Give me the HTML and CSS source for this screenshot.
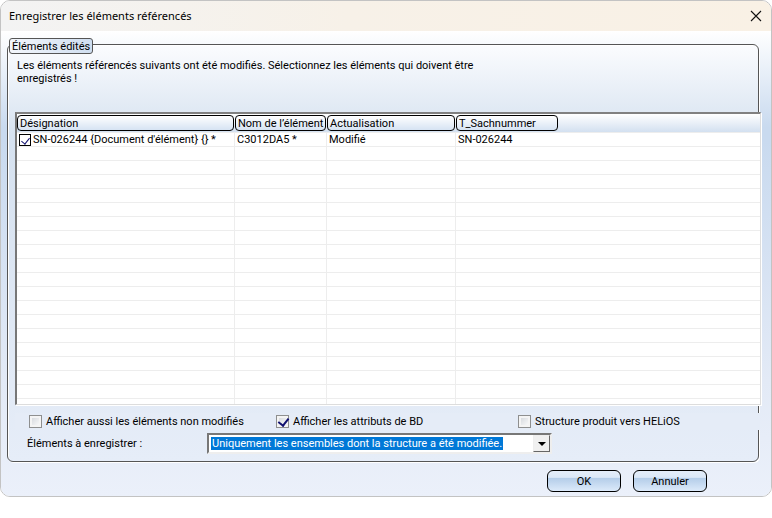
FILE: index.html
```html
<!DOCTYPE html>
<html lang="fr">
<head>
<meta charset="utf-8">
<title>Enregistrer les éléments référencés</title>
<link rel="stylesheet" href="styles.css">
</head>
<body>
<main class="dialog">
  <header class="titlebar">
    <h1>Enregistrer les éléments référencés</h1>
    <button class="close" type="button" aria-label="Fermer">
      <svg width="12" height="12" viewBox="0 0 12 12"><path d="M1 1l10 10M11 1L1 11" fill="none" stroke="#111" stroke-width="1.1"/></svg>
    </button>
  </header>
  <form class="content">
    <section class="group" aria-labelledby="legend">
      <h2 class="legend" id="legend">Éléments édités</h2>
      <p class="intro">Les éléments référencés suivants ont été modifiés. Sélectionnez les éléments qui doivent être enregistrés !</p>
      <div class="list">
        <table>
          <colgroup><col class="c1"><col class="c2"><col class="c3"><col class="c4"><col></colgroup>
          <thead>
            <tr><th><span>Désignation</span></th><th><span>Nom de l’élément</span></th><th><span>Actualisation</span></th><th><span>T_Sachnummer</span></th><th></th></tr>
          </thead>
          <tbody>
            <tr>
              <td><label class="item"><input class="tick" type="checkbox" checked>SN-026244 {Document d'élément} {} *</label></td>
              <td>C3012DA5 *</td><td>Modifié</td><td>SN-026244</td><td></td>
            </tr>
            <tr><td></td><td></td><td></td><td></td><td></td></tr>
            <tr><td></td><td></td><td></td><td></td><td></td></tr>
            <tr><td></td><td></td><td></td><td></td><td></td></tr>
            <tr><td></td><td></td><td></td><td></td><td></td></tr>
            <tr><td></td><td></td><td></td><td></td><td></td></tr>
            <tr><td></td><td></td><td></td><td></td><td></td></tr>
            <tr><td></td><td></td><td></td><td></td><td></td></tr>
            <tr><td></td><td></td><td></td><td></td><td></td></tr>
            <tr><td></td><td></td><td></td><td></td><td></td></tr>
            <tr><td></td><td></td><td></td><td></td><td></td></tr>
            <tr><td></td><td></td><td></td><td></td><td></td></tr>
            <tr><td></td><td></td><td></td><td></td><td></td></tr>
            <tr><td></td><td></td><td></td><td></td><td></td></tr>
            <tr><td></td><td></td><td></td><td></td><td></td></tr>
            <tr><td></td><td></td><td></td><td></td><td></td></tr>
            <tr><td></td><td></td><td></td><td></td><td></td></tr>
            <tr><td></td><td></td><td></td><td></td><td></td></tr>
            <tr><td></td><td></td><td></td><td></td><td></td></tr>
            <tr><td></td><td></td><td></td><td></td><td></td></tr>
          </tbody>
        </table>
      </div>
      <div class="options">
        <label><input type="checkbox">Afficher aussi les éléments non modifiés</label>
        <label><input type="checkbox" checked>Afficher les attributs de BD</label>
        <label><input type="checkbox">Structure produit vers HELiOS</label>
      </div>
      <div class="choice">
        <label for="scope">Éléments à enregistrer :</label>
        <div class="combo">
          <select id="scope"><option>Uniquement les ensembles dont la structure a été modifiée.</option></select>
          <span class="arrow" aria-hidden="true"></span>
        </div>
      </div>
    </section>
    <footer class="actions">
      <button type="button">OK</button>
      <button type="button">Annuler</button>
    </footer>
  </form>
</main>
</body>
</html>
```
FILE: styles.css
```css
* { box-sizing: border-box; }
body {
  margin: 0;
  background: #fff;
  color: #000;
  font: 11px/13px Roboto, sans-serif;
}
button, select, input { font: inherit; color: inherit; margin: 0; }
.dialog {
  border: 1px solid #c3c3c3;
  border-radius: 10px;
  overflow: hidden;
}
.titlebar {
  display: flex;
  align-items: center;
  justify-content: space-between;
  height: 30px;
  padding: 0 9px 0 8px;
  background: linear-gradient(90deg, #f3f3f3, #f7f1e8 45%, #f9f1e5);
}
.titlebar h1 { margin: 0; font: 11px/16px "Noto Sans", sans-serif; }
.close { display: flex; padding: 0; border: 0; background: none; }
.content {
  padding: 13px 12px 4px 6px;
  background: linear-gradient(#fff, #c9daef 96px, #c9daef 110px, #e3eaf6 350px, #ebf0fa);
}
.group {
  border: 1px solid #555;
  border-radius: 6px;
  box-shadow: 1px 1px #fff, inset 1px 1px #fff;
  padding: 0 0 7px 7px;
  background: linear-gradient(#fbfcfe, #d6e2f0 90px, #dbe5f2 200px, #e6edf8);
}
.legend {
  width: fit-content;
  margin: -7px 0 0 -6px;
  padding: 1px 2px 0;
  border: 1px solid #555;
  border-radius: 3px;
  background: linear-gradient(90deg, #f4f7fc, #cfdef0);
  font: inherit;
}
.intro { width: 470px; height: 53px; margin: 5px 0 0 2px; }
.list {
  margin-right: -3px;
  border: 2px solid #777;
  border-top-color: #808080;
  border-right: 1px solid #ddd;
  border-bottom: 1px solid #ddd;
  box-shadow: 1px 1px #fff;
  background: #fff;
}
table { width: 100%; table-layout: fixed; border-collapse: separate; border-spacing: 0; }
.c1 { width: 218px; }
.c2 { width: 92px; }
.c3 { width: 129px; }
.c4 { width: 103px; }
thead tr { background: linear-gradient(#fff, #d3e0f0); }
th { height: 18px; padding: 0 1px 0 0; text-align: left; font-weight: 400; }
th span {
  display: block;
  padding: 1px 2px 0;
  border: 1px solid #000;
  border-radius: 4px;
  background: linear-gradient(#fff, #d6e3f3);
  white-space: nowrap;
}
td {
  height: 14px;
  padding: 0 2px;
  border-bottom: 1px solid #ededed;
  white-space: nowrap;
}
tbody tr:first-child td { height: 15px; padding-top: 1px; border-top: 1px solid #ededed; line-height: 12px; }
tbody tr:last-child td { height: 5px; border-bottom: 0; }
td:nth-child(-n+3) { border-right: 1px solid #ededed; }
.item { display: flex; align-items: center; gap: 2px; }
input[type="checkbox"] {
  appearance: none;
  width: 13px;
  height: 13px;
  flex: none;
  border: 1px solid #8e8f8f;
  background: linear-gradient(135deg, #cfd3d8, #fff);
  box-shadow: inset 0 0 0 2px #f4f4f4;
}
input[type="checkbox"]:checked::before {
  content: "";
  display: block;
  width: 5px;
  height: 8px;
  margin: 0 0 0 3px;
  border: solid #101070;
  border-width: 0 2px 2px 0;
  transform: rotate(38deg);
}
input.tick[type="checkbox"] { width: 12px; height: 12px; border-color: #000; background: #fff; box-shadow: none; }
input.tick[type="checkbox"]:checked::before { line-height: 0; width: 4px; height: 7px; margin: 1px 0 0 3px; border-width: 0 1px 1px 0; }
.options {
  display: grid;
  grid-template-columns: 247px 242px 1fr;
  align-items: center;
  height: 17px;
  margin: 8px -2px 0 0;
  padding-left: 14px;
  background: #e5ecf7;
}
.options label { display: flex; align-items: center; gap: 4px; }
.choice {
  display: grid;
  grid-template-columns: 180px 345px;
  align-items: center;
  margin-top: 3px;
  padding-left: 12px;
}
.combo {
  display: flex;
  height: 21px;
  border: 2px solid #777;
  border-right: 2px solid #eee;
  border-bottom: 2px solid #eee;
  background: #fff;
}
.combo select {
  flex: 1;
  appearance: none;
  height: 13px;
  margin: 2px 0 0 2px;
  padding: 0 1px;
  border: 0;
  border-radius: 0;
  background: linear-gradient(#0078d7, #0078d7) 0 0 / 292px 13px no-repeat;
  color: #fff;
  line-height: 13px;
}
.arrow {
  display: flex;
  align-items: center;
  justify-content: center;
  width: 17px;
  border: 1px solid #eee;
  border-right-color: #666;
  border-bottom-color: #666;
  background: #f0f0f0;
  pointer-events: none;
}
.arrow::before { content: ""; border: 4px solid transparent; border-top-color: #000; border-bottom: 0; }
.actions { display: flex; justify-content: flex-end; gap: 12px; margin: 8px 52px 0 0; }
.actions button {
  width: 74px;
  height: 22px;
  padding: 0;
  border: 1px solid #000;
  border-radius: 6px;
  background: linear-gradient(#e4edf9, #dbe8f7 32%, #b4cde9 36%, #dceafa);
}
```
